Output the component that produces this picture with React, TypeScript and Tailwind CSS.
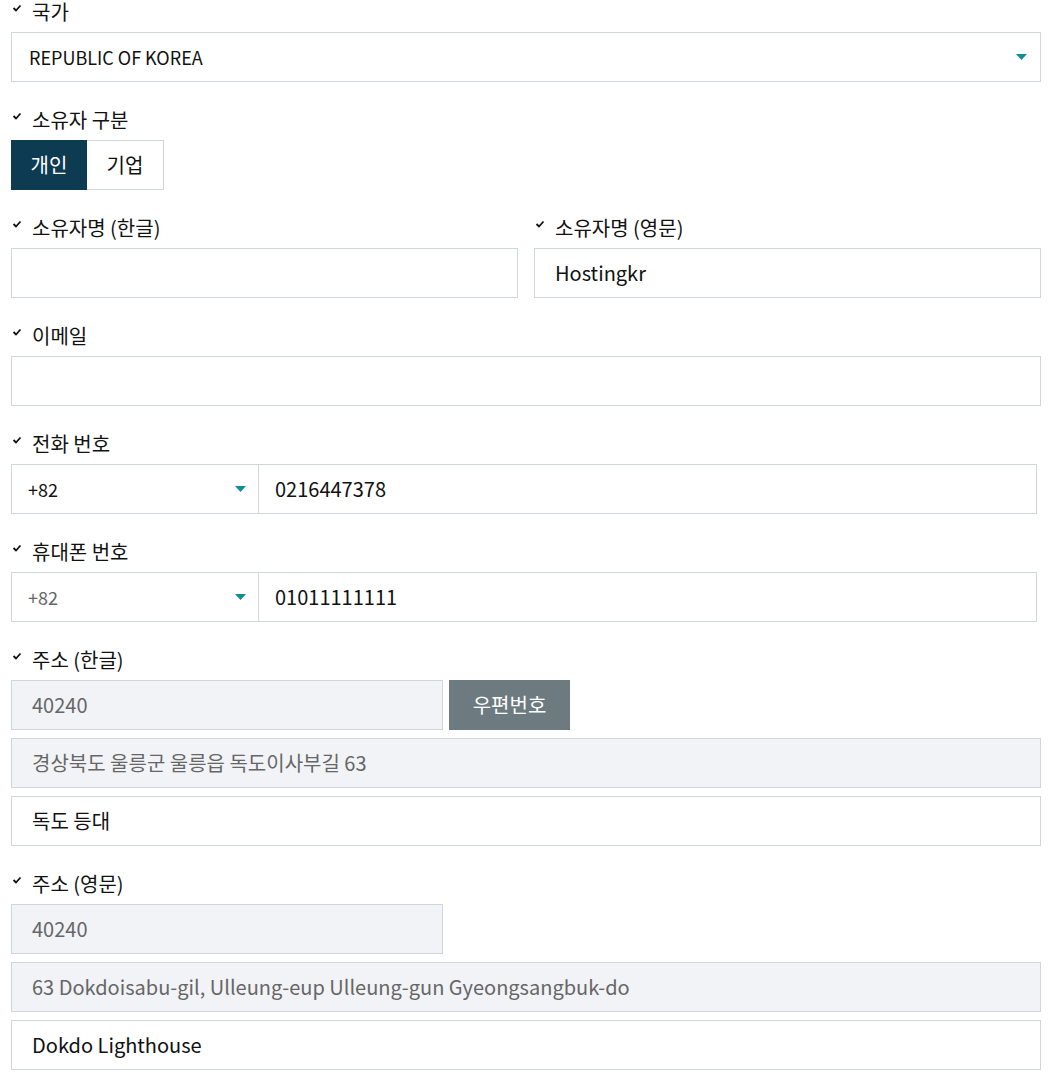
const font = { fontFamily: '"Noto Sans CJK KR", "Noto Sans", sans-serif' };

const Check = () => (
  <svg width="10" height="8" viewBox="0 0 10 8" className="mr-[10px] -mt-[8px] shrink-0">
    <path d="M1.5 4 L4 6.5 L8.5 1.5" stroke="#111" strokeWidth="1.8" fill="none" />
  </svg>
);

const Caret = () => (
  <svg width="11" height="7" viewBox="0 0 11 7" className="shrink-0">
    <path d="M0 0 H11 L5.5 6 Z" fill="#0e8f96" />
  </svg>
);

const Label = ({ text }: { text: string }) => (
  <div className="flex items-center h-6 mb-2 pl-px text-[20px] leading-6 text-[#111]">
    <Check />
    <div className="h-6 leading-6">{text}</div>
  </div>
);

const Box = ({
  value,
  muted,
  gray,
  className = "",
}: {
  value?: string;
  muted?: boolean;
  gray?: boolean;
  className?: string;
}) => (
  <div
    className={`h-[50px] flex items-center px-5 border border-[#cfd7dc] text-[20px] ${
      gray ? "bg-[#f2f3f6]" : "bg-white"
    } ${muted ? "text-[#666]" : "text-[#111]"} ${className}`}
  >
    {value}
  </div>
);

const Select = ({ value, muted, className = "" }: { value: string; muted?: boolean; className?: string }) => (
  <div
    className={`h-[50px] flex items-center justify-between pl-4 pr-3 border border-[#cfd7dc] bg-white text-[18px] ${
      muted ? "text-[#666]" : "text-[#111]"
    } ${className}`}
  >
    <span>{value}</span>
    <Caret />
  </div>
);

export default function App() {
  return (
    <div className="w-[1056px] bg-white pl-[11px] pr-[15px] pb-3" style={font}>
      <div className="flex flex-col gap-[26px]">
        <section>
          <Label text="국가" />
          <Select value="REPUBLIC OF KOREA" className="pl-[17px] pr-[13px] text-[18.6px]" />
        </section>

        <section>
          <Label text="소유자 구분" />
          <div className="flex">
            <div className="w-[76px] h-[50px] flex items-center justify-center bg-[#0d3b52] text-white text-[20px]">
              개인
            </div>
            <div className="w-[77px] h-[50px] flex items-center justify-center border border-l-0 border-[#cfd7dc] text-[#111] text-[20px]">
              기업
            </div>
          </div>
        </section>

        <section className="grid grid-cols-2 gap-4">
          <div>
            <Label text="소유자명 (한글)" />
            <Box />
          </div>
          <div>
            <Label text="소유자명 (영문)" />
            <Box value="Hostingkr" />
          </div>
        </section>

        <section>
          <Label text="이메일" />
          <Box />
        </section>

        <section>
          <Label text="전화 번호" />
          <div className="flex pr-1">
            <Select value="+82" className="w-[248px]" />
            <Box value="0216447378" className="flex-1 border-l-0 pl-4" />
          </div>
        </section>

        <section>
          <Label text="휴대폰 번호" />
          <div className="flex pr-1">
            <Select value="+82" muted className="w-[248px]" />
            <Box value="01011111111" className="flex-1 border-l-0 pl-4" />
          </div>
        </section>

        <section>
          <Label text="주소 (한글)" />
          <div className="flex flex-col gap-2">
            <div className="flex gap-[6px]">
              <Box value="40240" gray muted className="w-[432px]" />
              <div className="w-[121px] h-[50px] flex items-center justify-center bg-[#6d7b80] text-white text-[20px]">
                우편번호
              </div>
            </div>
            <Box value="경상북도 울릉군 울릉읍 독도이사부길 63" gray muted />
            <Box value="독도 등대" />
          </div>
        </section>

        <section>
          <Label text="주소 (영문)" />
          <div className="flex flex-col gap-2">
            <Box value="40240" gray muted className="w-[432px]" />
            <Box value="63 Dokdoisabu-gil, Ulleung-eup Ulleung-gun Gyeongsangbuk-do" gray muted />
            <Box value="Dokdo Lighthouse" />
          </div>
        </section>
      </div>
    </div>
  );
}
